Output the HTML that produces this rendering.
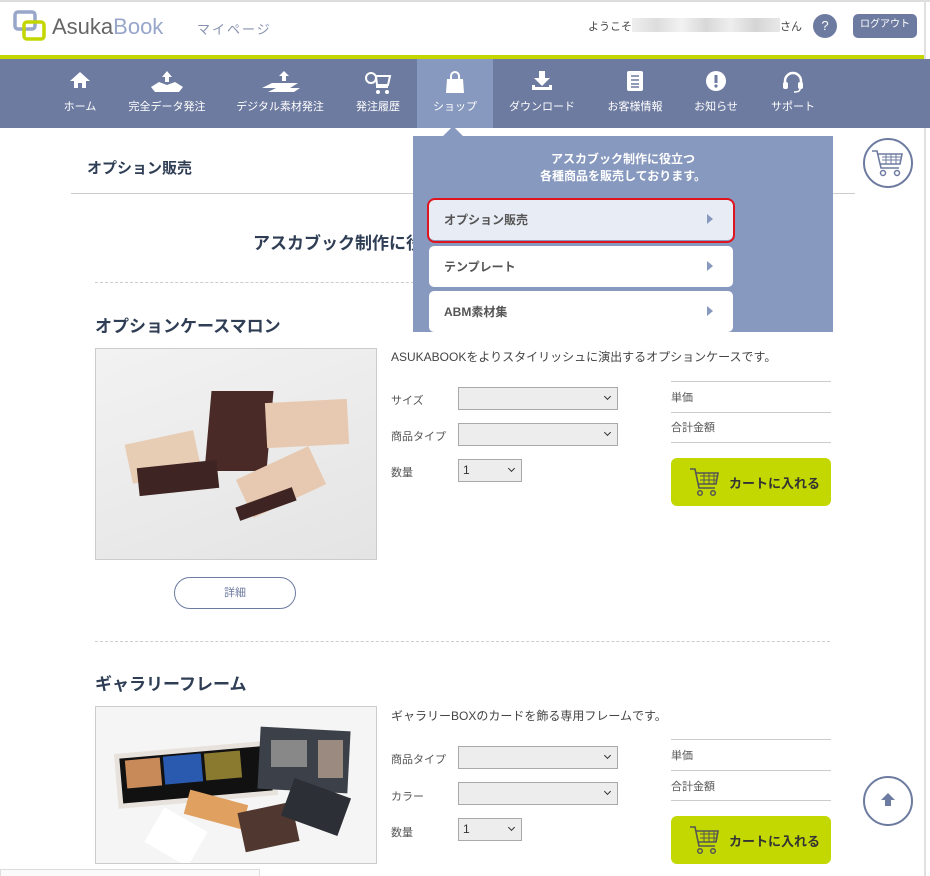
<!DOCTYPE html>
<html><head><meta charset="utf-8"><style>
*{box-sizing:border-box;margin:0;padding:0}
body{width:930px;height:876px;overflow:hidden;background:#fff;font-family:"Liberation Sans","Noto Sans CJK JP",sans-serif;color:#333;position:relative}
.a{position:absolute}
.nav{left:0;top:59px;width:930px;height:69px;background:#6e7ba0}
.ni{position:absolute;top:0;height:69px;color:#fff;font-size:11px;text-align:center}
.ni span{position:absolute;left:0;right:0;top:39px;white-space:nowrap}
.ni svg{position:absolute;left:50%;top:12px;transform:translateX(-50%)}
.sel{position:absolute;height:23px;background:#ededed;border:1px solid #a9a9a9;font-size:12px;padding:3px 4px}
.sel:after{content:"";position:absolute;right:7px;top:6px;width:4px;height:4px;border-right:1.5px solid #333;border-bottom:1.5px solid #333;transform:rotate(45deg)}
.lb{position:absolute;font-size:11px;color:#555}
.hl{position:absolute;height:1px;background:#ccc}
.btn{position:absolute;background:#c3d800;border-radius:6px;font-size:13px;font-weight:bold;color:#333}
.dd{position:absolute;left:16px;width:304px;height:41px;background:#fff;border-radius:5px;font-size:12px;color:#555;font-weight:bold;padding:12px 15px}
.dd:after{content:"";position:absolute;right:20px;top:15px;border-left:6px solid #8799bf;border-top:5px solid transparent;border-bottom:5px solid transparent}
</style></head><body>
<div class="a" style="left:0;top:0;width:930px;height:2px;background:#ddd"></div>
<div class="a" style="left:924px;top:0;width:2px;height:876px;background:#e0e0e0"></div>
<!-- logo -->
<svg class="a" style="left:13px;top:10px" width="34" height="32"><rect x="2" y="2" width="20" height="17" rx="3" fill="none" stroke="#97a6c9" stroke-width="3.5"/><rect x="11" y="12" width="20" height="17" rx="3" fill="none" stroke="#c3d600" stroke-width="3.5"/></svg>
<div class="a" style="left:52px;top:14px;font-size:22px;color:#666">Asuka<span style="color:#97a6c9">Book</span></div>
<div class="a" style="left:197px;top:19px;font-size:13px;color:#8792b0;letter-spacing:2px">マイページ</div>
<div class="a" style="left:588px;top:18px;font-size:11px;color:#444">ようこそ</div>
<div class="a" style="left:632px;top:18px;width:148px;height:14px;background:linear-gradient(90deg,#eee,#ddd,#f2f2f2,#d8d8d8,#eee,#d5d5d5,#e8e8e8)"></div>
<div class="a" style="left:780px;top:18px;font-size:11px;color:#444">さん</div>
<div class="a" style="left:813px;top:14px;width:24px;height:24px;border-radius:50%;background:#6e7ba0;color:#fff;font-size:13px;text-align:center;line-height:24px">?</div>
<div class="a" style="left:853px;top:14px;width:64px;height:24px;border-radius:5px;background:#6e7ba0;color:#fff;font-size:10px;text-align:center;line-height:22px">ログアウト</div>
<div class="a" style="left:0;top:55px;width:924px;height:4px;background:#c3d600"></div>
<div class="a nav">
<div class="ni" style="left:50px;width:60px"><svg width="22" height="18"><path d="M11 1L1 10h4v7h4v-5h4v5h4v-7h4z" fill="#fff"/></svg><span>ホーム</span></div>
<div class="ni" style="left:122px;width:90px"><svg width="36" height="22"><path d="M18 0l5 6h-3v5h-4V6h-3z M2 16l8-5 8 3 8-3 8 5-4 5H6z" fill="#fff"/></svg><span>完全データ発注</span></div>
<div class="ni" style="left:230px;width:100px"><svg width="40" height="22"><path d="M24 0l5 5h-3v5h-4V5h-3z M2 17l10-5h26l-8 5z M8 21l8-4h24l-6 4z" fill="#fff"/></svg><span>デジタル素材発注</span></div>
<div class="ni" style="left:348px;width:60px"><svg width="28" height="24"><circle cx="7" cy="7" r="5" fill="none" stroke="#fff" stroke-width="2"/><path d="M12 5h14l-2 9H13z M12 16h12" stroke="#fff" stroke-width="2" fill="none"/><circle cx="14" cy="21" r="2" fill="#fff"/><circle cx="23" cy="21" r="2" fill="#fff"/></svg><span>発注履歴</span></div>
<div class="ni" style="left:417px;width:76px;background:#8799bf"><svg width="20" height="22"><path d="M6 8V5a4 4 0 018 0v3" stroke="#fff" stroke-width="2" fill="none"/><path d="M2 8h16l1 14H1z" fill="#fff"/></svg><span>ショップ</span></div>
<div class="ni" style="left:502px;width:80px"><svg width="22" height="20"><path d="M8 0h6v7h5l-8 8-8-8h5z M1 14v5h20v-5h-3v2H4v-2z" fill="#fff"/></svg><span>ダウンロード</span></div>
<div class="ni" style="left:600px;width:70px"><svg width="16" height="20"><rect x="0" y="0" width="16" height="20" rx="2" fill="#fff"/><path d="M4 5h8M4 9h8M4 13h8M4 16h8" stroke="#6e7ba0" stroke-width="1.5"/></svg><span>お客様情報</span></div>
<div class="ni" style="left:686px;width:60px"><svg width="20" height="20"><circle cx="10" cy="10" r="10" fill="#fff"/><rect x="8.5" y="4" width="3" height="8" fill="#6e7ba0"/><circle cx="10" cy="15" r="1.6" fill="#6e7ba0"/></svg><span>お知らせ</span></div>
<div class="ni" style="left:763px;width:60px"><svg width="22" height="22"><path d="M3 13v-3a8 8 0 0116 0v3" stroke="#fff" stroke-width="2.5" fill="none"/><rect x="1" y="11" width="5" height="7" rx="2" fill="#fff"/><rect x="16" y="11" width="5" height="7" rx="2" fill="#fff"/><path d="M18 18q0 3-6 3" stroke="#fff" stroke-width="1.5" fill="none"/></svg><span>サポート</span></div>
</div>
<!-- page heading -->
<div class="a" style="left:87px;top:157px;font-size:15px;font-weight:bold;color:#2f3e55">オプション販売</div>
<div class="hl" style="left:71px;top:193px;width:784px"></div>
<div class="a" style="left:863px;top:138px;width:50px;height:50px;border:2px solid #6e7ba0;border-radius:50%"></div>
<svg class="a" style="left:870px;top:148px" width="36" height="30"><path d="M2 3h5l4 17h18M8 6h24l-2 10H10" stroke="#6e7ba0" stroke-width="1.6" fill="none"/><path d="M12 9h19M12 12h18M16 6v10M21 6v10M26 6v10" stroke="#6e7ba0" stroke-width="1"/><circle cx="13" cy="25" r="2.5" fill="none" stroke="#6e7ba0" stroke-width="1.5"/><circle cx="27" cy="25" r="2.5" fill="none" stroke="#6e7ba0" stroke-width="1.5"/></svg>
<div class="a" style="left:253px;top:229px;font-size:17px;font-weight:bold;color:#2f3e55">アスカブック制作に役立つ各種商品を販売しております。</div>
<div class="a" style="left:95px;top:282px;width:735px;border-top:1px dashed #ccc"></div>
<!-- product 1 -->
<div class="a" style="left:95px;top:312px;font-size:17px;font-weight:bold;color:#2f3e55">オプションケースマロン</div>
<div class="a" style="left:95px;top:348px;width:282px;height:212px;border:1px solid #ccc;background:linear-gradient(160deg,#f2f2f2,#e4e4e4);overflow:hidden">
<div class="a" style="left:112px;top:42px;width:62px;height:80px;background:#4a2a26;transform:skewX(-5deg)"></div>
<div class="a" style="left:170px;top:52px;width:82px;height:45px;background:#e6c9b0;transform:rotate(-3deg)"></div>
<div class="a" style="left:32px;top:88px;width:70px;height:40px;background:#e8cdb5;transform:rotate(-12deg)"></div>
<div class="a" style="left:42px;top:115px;width:80px;height:28px;background:#3e2422;transform:rotate(-6deg)"></div>
<div class="a" style="left:145px;top:112px;width:80px;height:42px;background:#e6c9b0;transform:rotate(-25deg)"></div>
<div class="a" style="left:140px;top:148px;width:60px;height:14px;background:#3e2422;transform:rotate(-20deg)"></div>
</div>
<div class="a" style="left:174px;top:577px;width:122px;height:32px;border:1px solid #6e7ba0;border-radius:16px;font-size:11px;color:#6e7ba0;text-align:center;line-height:30px">詳細</div>
<div class="a" style="left:391px;top:348px;font-size:12px;color:#444">ASUKABOOKをよりスタイリッシュに演出するオプションケースです。</div>
<div class="lb" style="left:391px;top:392px">サイズ</div><div class="sel" style="left:458px;top:387px;width:160px"></div>
<div class="lb" style="left:391px;top:428px">商品タイプ</div><div class="sel" style="left:458px;top:423px;width:160px"></div>
<div class="lb" style="left:391px;top:464px">数量</div><div class="sel" style="left:458px;top:459px;width:64px">1</div>
<div class="hl" style="left:671px;top:381px;width:160px"></div>
<div class="lb" style="left:671px;top:389px">単価</div>
<div class="hl" style="left:671px;top:412px;width:160px"></div>
<div class="lb" style="left:671px;top:419px">合計金額</div>
<div class="hl" style="left:671px;top:442px;width:160px"></div>
<div class="btn" style="left:671px;top:458px;width:160px;height:48px"><svg class="a" style="left:18px;top:8px" width="32" height="32"><path d="M1 3h5l4 19h16M7 7h22l-2 11H9" stroke="#555" stroke-width="1.6" fill="none"/><path d="M11 10h17M11 14h16M15 7v11M20 7v11M25 7v11" stroke="#555" stroke-width="1"/><circle cx="11" cy="27" r="2.3" fill="none" stroke="#555" stroke-width="1.5"/><circle cx="24" cy="27" r="2.3" fill="none" stroke="#555" stroke-width="1.5"/></svg><span class="a" style="left:58px;top:15px">カートに入れる</span></div>
<div class="a" style="left:95px;top:641px;width:735px;border-top:1px dashed #ccc"></div>
<!-- product 2 -->
<div class="a" style="left:95px;top:670px;font-size:17px;font-weight:bold;color:#2f3e55">ギャラリーフレーム</div>
<div class="a" style="left:95px;top:706px;width:282px;height:158px;border:1px solid #ccc;background:#f5f5f5;overflow:hidden">
<div class="a" style="left:20px;top:40px;width:160px;height:55px;background:#e8e2dc;transform:rotate(-5deg)"></div>
<div class="a" style="left:25px;top:45px;width:150px;height:45px;background:#111;transform:rotate(-5deg)"></div>
<div class="a" style="left:30px;top:52px;width:35px;height:28px;background:#c98a5a;transform:rotate(-5deg)"></div>
<div class="a" style="left:68px;top:48px;width:38px;height:28px;background:#2a5ab0;transform:rotate(-5deg)"></div>
<div class="a" style="left:109px;top:45px;width:36px;height:27px;background:#8a7a30;transform:rotate(-5deg)"></div>
<div class="a" style="left:163px;top:22px;width:90px;height:62px;background:#3c4048;transform:rotate(3deg)"></div>
<div class="a" style="left:175px;top:33px;width:36px;height:27px;background:#888"></div>
<div class="a" style="left:222px;top:33px;width:25px;height:38px;background:#9a8a80"></div>
<div class="a" style="left:55px;top:110px;width:50px;height:40px;background:#fff;transform:rotate(30deg)"></div>
<div class="a" style="left:90px;top:90px;width:60px;height:25px;background:#e0a060;transform:rotate(15deg)"></div>
<div class="a" style="left:145px;top:100px;width:55px;height:40px;background:#503830;transform:rotate(-12deg)"></div>
<div class="a" style="left:190px;top:80px;width:60px;height:40px;background:#2c2f35;transform:rotate(20deg)"></div>
</div>
<div class="a" style="left:391px;top:707px;font-size:12px;color:#444">ギャラリーBOXのカードを飾る専用フレームです。</div>
<div class="lb" style="left:391px;top:751px">商品タイプ</div><div class="sel" style="left:458px;top:746px;width:160px"></div>
<div class="lb" style="left:391px;top:788px">カラー</div><div class="sel" style="left:458px;top:782px;width:160px"></div>
<div class="lb" style="left:391px;top:824px">数量</div><div class="sel" style="left:458px;top:818px;width:64px">1</div>
<div class="hl" style="left:671px;top:739px;width:160px"></div>
<div class="lb" style="left:671px;top:747px">単価</div>
<div class="hl" style="left:671px;top:770px;width:160px"></div>
<div class="lb" style="left:671px;top:778px">合計金額</div>
<div class="hl" style="left:671px;top:800px;width:160px"></div>
<div class="btn" style="left:671px;top:816px;width:160px;height:48px"><svg class="a" style="left:18px;top:8px" width="32" height="32"><path d="M1 3h5l4 19h16M7 7h22l-2 11H9" stroke="#555" stroke-width="1.6" fill="none"/><path d="M11 10h17M11 14h16M15 7v11M20 7v11M25 7v11" stroke="#555" stroke-width="1"/><circle cx="11" cy="27" r="2.3" fill="none" stroke="#555" stroke-width="1.5"/><circle cx="24" cy="27" r="2.3" fill="none" stroke="#555" stroke-width="1.5"/></svg><span class="a" style="left:58px;top:15px">カートに入れる</span></div>
<div class="a" style="left:863px;top:776px;width:50px;height:50px;border:2px solid #6e7ba0;border-radius:50%;background:#fff"></div>
<svg class="a" style="left:880px;top:792px" width="16" height="16"><path d="M8 1L1 8h4v6h6V8h4z" fill="#6e7ba0"/></svg>
<div class="a" style="left:0;top:869px;width:260px;height:7px;border:1px solid #ddd;border-bottom:none;background:#fafafa"></div>
<!-- dropdown -->
<div class="a" style="left:413px;top:136px;width:420px;height:196px;background:#8799bf">
<div class="a" style="left:33px;top:-7px;width:14px;height:14px;background:#8799bf;transform:rotate(45deg)"></div>
<div class="a" style="left:0;top:15px;width:420px;text-align:center;color:#fff;font-size:12px;font-weight:bold;line-height:17px">アスカブック制作に役立つ<br>各種商品を販売しております。</div>
<div class="dd" style="top:63px;background:#e8edf5">オプション販売</div>
<div class="a" style="left:14px;top:62px;width:308px;height:45px;border:2px solid #e0141e;border-radius:8px"></div>
<div class="dd" style="top:110px">テンプレート</div>
<div class="dd" style="top:155px">ABM素材集</div>
</div>
</body></html>
